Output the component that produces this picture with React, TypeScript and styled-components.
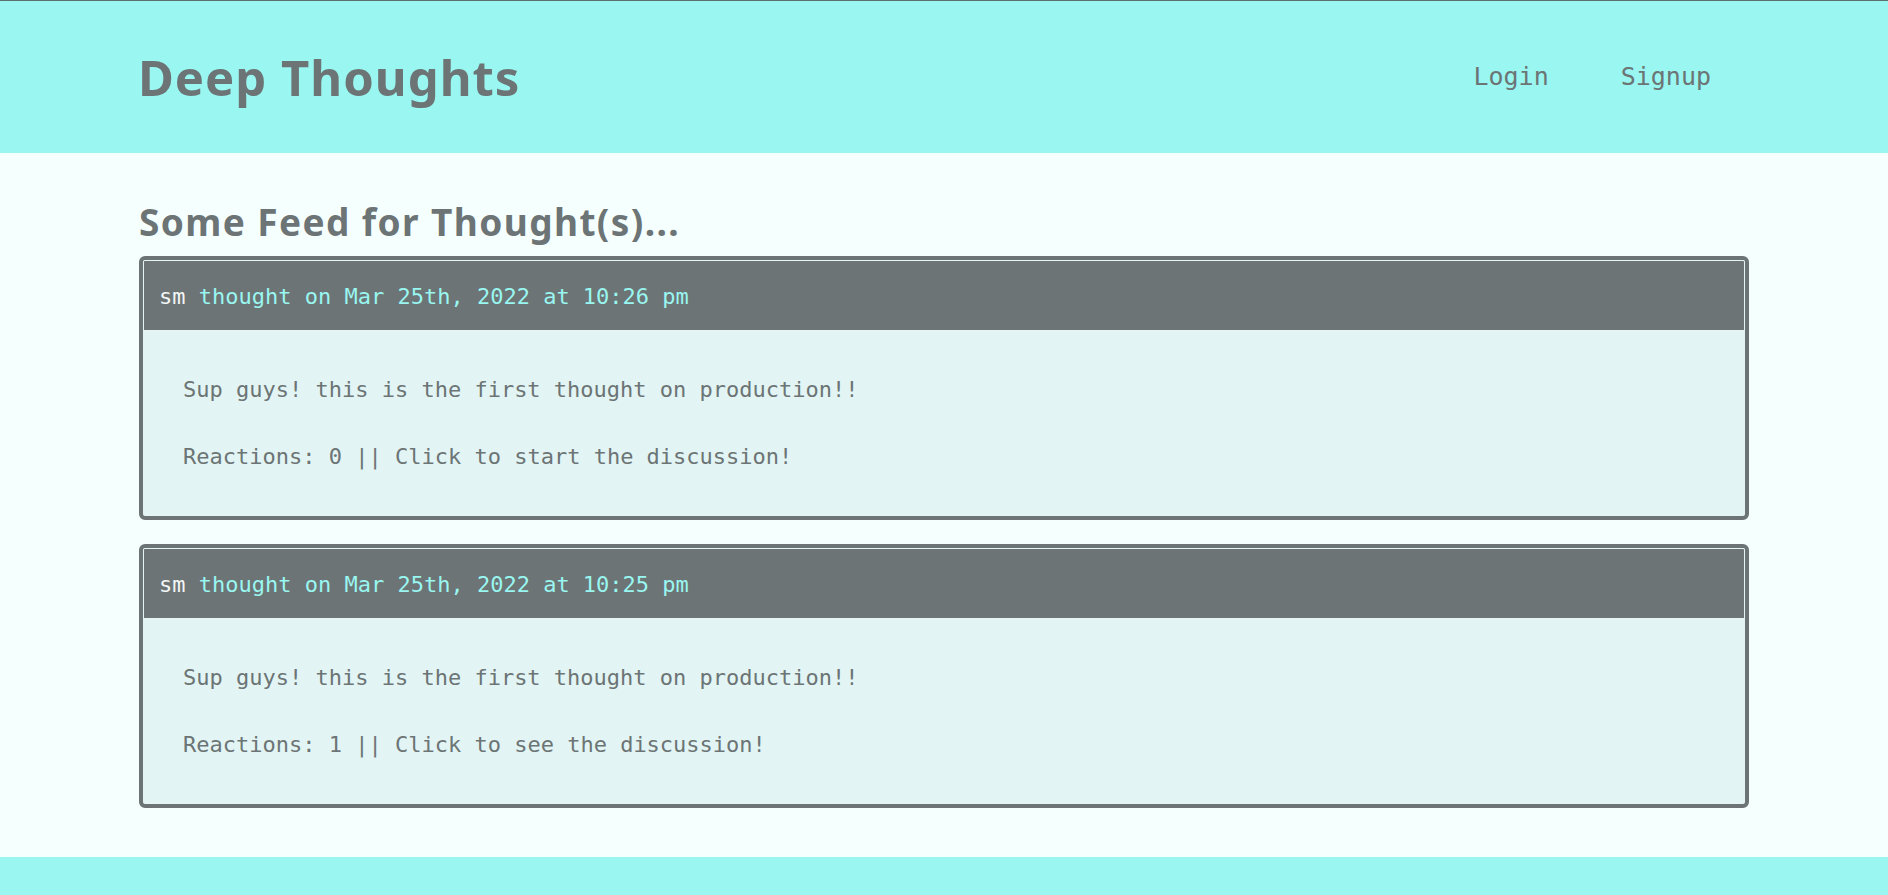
import React from "react";
import styled, { createGlobalStyle } from "styled-components";

const GlobalStyle = createGlobalStyle`
  html, body {
    margin: 0;
    padding: 0;
    background: #f5fffe;
  }
  body {
    font-family: "DejaVu Sans Mono", "Liberation Mono", monospace;
    color: #6c7475;
  }
  * { box-sizing: border-box; }
`;

const Page = styled.div`
  display: flex;
  flex-direction: column;
  min-height: 100vh;
`;

const Header = styled.header`
  background: #99f6f0;
  border-top: 1px solid #5d6f70;
  height: 153px;
  display: flex;
  align-items: center;
`;

const Container = styled.div`
  width: 100%;
  max-width: 1610px;
  margin: 0 auto;
`;

const HeaderInner = styled(Container)`
  display: flex;
  align-items: center;
  justify-content: space-between;
`;

const Brand = styled.h1`
  margin: 0 0 0 -1px;
  font-family: "Noto Sans", "Liberation Sans", sans-serif;
  font-weight: 700;
  font-size: 49px;
  line-height: 1.2;
  letter-spacing: 1px;
  color: #6c7475;
`;

const Nav = styled.nav`
  display: flex;
  align-items: center;
  gap: 72px;
  margin-right: 38px;
`;

const NavLink = styled.a`
  font-family: "DejaVu Sans Mono", "Liberation Mono", monospace;
  font-size: 25px;
  color: #6c7475;
  text-decoration: none;
  cursor: pointer;
`;

const Main = styled(Container)`
  flex: 1;
  display: flex;
  flex-direction: column;
  padding: 47px 0 49px;
`;

const SectionTitle = styled.h2`
  margin: 0 0 12px;
  font-family: "Noto Sans", "Liberation Sans", sans-serif;
  font-weight: 700;
  font-size: 37px;
  line-height: 1.2;
  letter-spacing: 1.4px;
  color: #6c7475;
`;

const Feed = styled.div`
  display: flex;
  flex-direction: column;
  gap: 24px;
`;

const Card = styled.article`
  border: 4px solid #6c7475;
  border-radius: 6px;
  background: #e2f5f4;
  overflow: hidden;
`;

const CardHeader = styled.div`
  background: #6c7475;
  border: 1px solid #e2f5f4;
  border-bottom: none;
  border-radius: 2px 2px 0 0;
  height: 70px;
  padding: 23px 15px 0;
  font-size: 22px;
  line-height: 25.6px;
`;

const Author = styled.span`
  color: #f3f7f6;
`;

const Stamp = styled.span`
  color: #99f6f0;
`;

const CardBody = styled.div`
  padding: 43px 40px 43px;
  display: flex;
  flex-direction: column;
  gap: 34px;
`;

const Line = styled.p`
  margin: 0;
  font-size: 22px;
  line-height: 33px;
  color: #6c7475;
`;

const Footer = styled.footer`
  background: #99f6f0;
  height: 60px;
`;

const thoughts = [
  {
    user: "sm",
    date: "Mar 25th, 2022 at 10:26 pm",
    text: "Sup guys! this is the first thought on production!!",
    reactions: 0,
  },
  {
    user: "sm",
    date: "Mar 25th, 2022 at 10:25 pm",
    text: "Sup guys! this is the first thought on production!!",
    reactions: 1,
  },
];

export default function App() {
  return (
    <Page>
      <GlobalStyle />
      <Header>
        <HeaderInner>
          <Brand>Deep Thoughts</Brand>
          <Nav>
            <NavLink>Login</NavLink>
            <NavLink>Signup</NavLink>
          </Nav>
        </HeaderInner>
      </Header>
      <Main as="main">
        <SectionTitle>Some Feed for Thought(s)...</SectionTitle>
        <Feed>
          {thoughts.map((t, i) => (
            <Card key={i}>
              <CardHeader>
                <Author>{t.user}</Author>{" "}
                <Stamp>thought on {t.date}</Stamp>
              </CardHeader>
              <CardBody>
                <Line>{t.text}</Line>
                <Line>
                  Reactions: {t.reactions} || Click to{" "}
                  {t.reactions ? "see" : "start"} the discussion!
                </Line>
              </CardBody>
            </Card>
          ))}
        </Feed>
      </Main>
      <Footer />
    </Page>
  );
}
